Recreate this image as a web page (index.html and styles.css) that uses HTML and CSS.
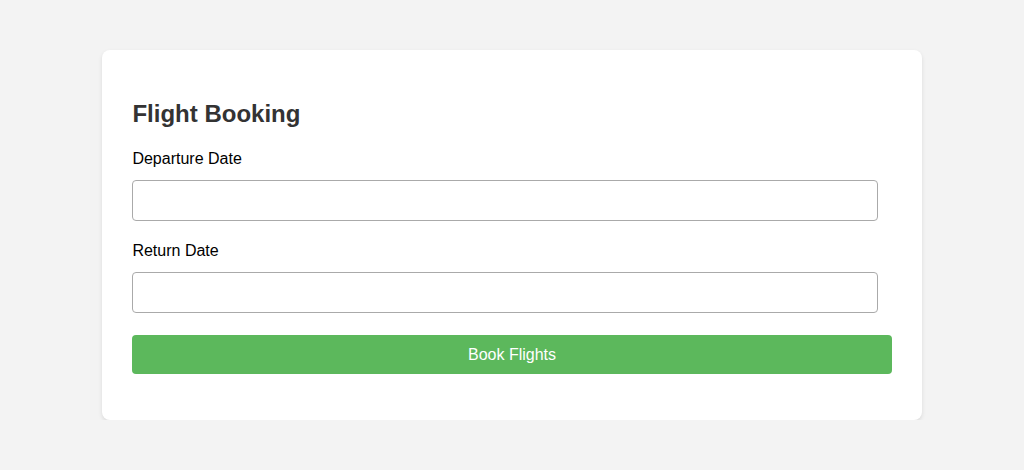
FILE: index.html
```html
<!DOCTYPE html>
<html lang="en">
<head>
<meta charset="utf-8">
<title>Flight Booking</title>
<link rel="stylesheet" href="styles.css">
</head>
<body>
<div class="card">
  <h2 class="title">Flight Booking</h2>
  <form class="form">
    <label class="label" for="dep">Departure Date</label>
    <input class="field" id="dep" type="text">
    <label class="label" for="ret">Return Date</label>
    <input class="field" id="ret" type="text">
    <button class="btn" type="button">Book Flights</button>
  </form>
</div>
</body>
</html>
```

FILE: styles.css
```css
html, body {
  margin: 0;
  padding: 0;
}
body {
  background: #f3f3f3;
  font-family: "Liberation Sans", Arial, sans-serif;
  padding-top: 50px;
}
.card {
  width: 80%;
  margin: 0 auto;
  background: #fff;
  border-radius: 8px;
  box-shadow: 0 2px 4px rgba(0,0,0,0.1);
  padding: 30px 30px 46px;
  box-sizing: border-box;
}
.title {
  font-size: 24px;
  font-weight: bold;
  color: #333;
  margin: 20px 0 21px;
  line-height: 28px;
}
.form {
  display: flex;
  flex-direction: column;
  align-items: flex-start;
}
.label {
  font-size: 16px;
  line-height: 19px;
  color: #000;
  margin-bottom: 12px;
}
.field {
  width: 746px;
  box-sizing: border-box;
  height: 41px;
  border: 1px solid #aaa;
  border-radius: 4px;
  padding: 10px;
  font-size: 16px;
  font-family: inherit;
  margin: 0 0 20px;
}
.btn {
  width: 100%;
  height: 39px;
  margin-top: 2px;
  border: none;
  border-radius: 4px;
  background: #5cb85c;
  color: #fff;
  font-size: 16px;
  font-family: inherit;
  cursor: pointer;
}
```
